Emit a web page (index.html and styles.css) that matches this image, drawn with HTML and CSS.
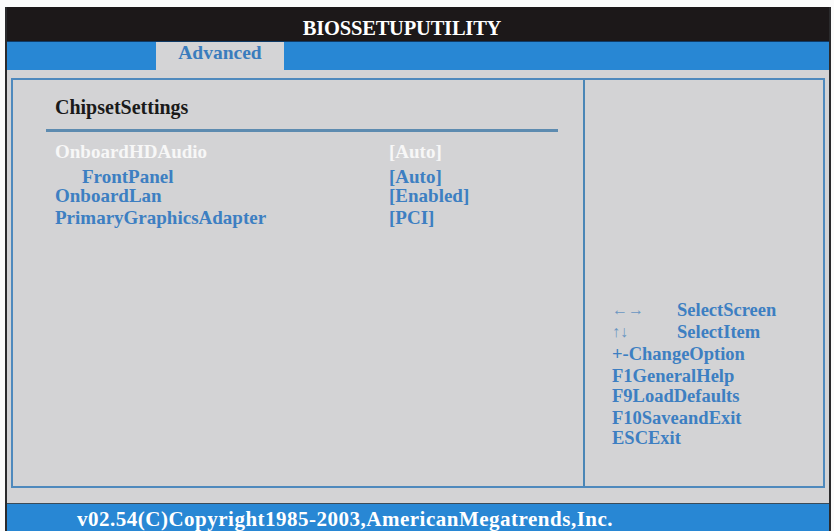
FILE: index.html
```html
<!DOCTYPE html>
<html lang="en">
<head>
    <meta charset="UTF-8">
    <meta name="viewport" content="width=device-width, initial-scale=1.0">
    <title>BIOS Setup Utility</title>
    <link rel="stylesheet" href="styles.css">
</head>
<body>
    <div class="frame">
        <div class="titlebar">BIOSSETUPUTILITY</div>
        <div class="tabs">
            <div class="tab">Advanced</div>
        </div>
        <div class="main">
            <div class="panel">
                <div class="settings">
                    <h2 class="section">ChipsetSettings</h2>
                    <div class="rule"></div>
                    <div class="row selected">
                        <span>OnboardHDAudio</span>
                        <span>[Auto]</span>
                    </div>
                    <div class="row sub gap">
                        <span>FrontPanel</span>
                        <span>[Auto]</span>
                    </div>
                    <div class="row">
                        <span>OnboardLan</span>
                        <span>[Enabled]</span>
                    </div>
                    <div class="row">
                        <span>PrimaryGraphicsAdapter</span>
                        <span>[PCI]</span>
                    </div>
                </div>
                <div class="help">
                    <div class="keys">
                        <div class="key"><span class="glyph">&larr;&rarr;</span><span>SelectScreen</span></div>
                        <div class="key"><span class="glyph">&uarr;&darr;</span><span>SelectItem</span></div>
                        <div>+-ChangeOption</div>
                        <div class="tall">F1GeneralHelp</div>
                        <div>F9LoadDefaults</div>
                        <div class="tall">F10SaveandExit</div>
                        <div>ESCExit</div>
                    </div>
                </div>
            </div>
        </div>
        <div class="footer">v02.54(C)Copyright1985-2003,AmericanMegatrends,Inc.</div>
    </div>
</body>
</html>
```

FILE: styles.css
```css
body {
    margin: 0;
    background: #fbfbfb;
    font-family: "Liberation Serif", "Times New Roman", serif;
    font-weight: bold;
    overflow: hidden;
}

.frame {
    margin: 7px 0 0 5px;
    width: 822px;
    border-left: 2px solid #2a2a2c;
    border-right: 2px solid #2a2a2c;
}

.titlebar {
    height: 34px;
    background: #1c1819;
    color: #fff;
    font-size: 20.5px;
    line-height: 42px;
    text-align: center;
    padding-right: 32px;
    letter-spacing: -0.2px;
}

.tabs {
    height: 28px;
    background: #2887d4;
    border-top: 1px solid #0f3a66;
    padding-left: 149px;
}

.tab {
    width: 128px;
    height: 28px;
    background: #d4d4d6;
    color: #3a7cbd;
    font-size: 19.5px;
    line-height: 22px;
    text-align: center;
}

.main {
    background: #d3d3d5;
    padding: 8px 4px 15px;
    border-bottom: 1px solid #3b4b58;
}

.panel {
    display: flex;
    height: 406px;
    border: 2px solid #4e89bd;
}

.settings {
    width: 572px;
    border-right: 2px solid #4a86b6;
    padding: 14px 0 0 33px;
    box-sizing: border-box;
}

.section {
    margin: 0 0 0 9px;
    font-size: 20px;
    color: #1a1a1a;
    line-height: 26px;
}

.rule {
    width: 512px;
    height: 3px;
    background: #5d8bb0;
    margin: 9px 0 10px;
}

.row {
    display: grid;
    grid-template-columns: 334px auto;
    padding-left: 9px;
    font-size: 19px;
    line-height: 20px;
    color: #3d7fc2;
}

.row.selected {
    color: #f7f7f7;
}

.row.sub {
    padding-left: 36px;
    grid-template-columns: 307px auto;
}

.row.gap {
    margin-top: 6px;
    line-height: 18px;
}

.row:last-child {
    margin-top: 2px;
}

.help {
    flex: 1;
    position: relative;
}

.keys {
    position: absolute;
    left: 27px;
    top: 220px;
    font-size: 18.5px;
    line-height: 20px;
    color: #3d7fc2;
}

.key {
    display: flex;
    margin-bottom: 2px;
}

.glyph {
    width: 65px;
    font-size: 16px;
    color: #6a96c2;
}

.tall {
    margin-top: 2px;
}

.footer {
    height: 29px;
    background: #2887d4;
    color: #fff;
    font-size: 21px;
    line-height: 31px;
    padding-left: 70px;
    letter-spacing: 0.5px;
}
```
